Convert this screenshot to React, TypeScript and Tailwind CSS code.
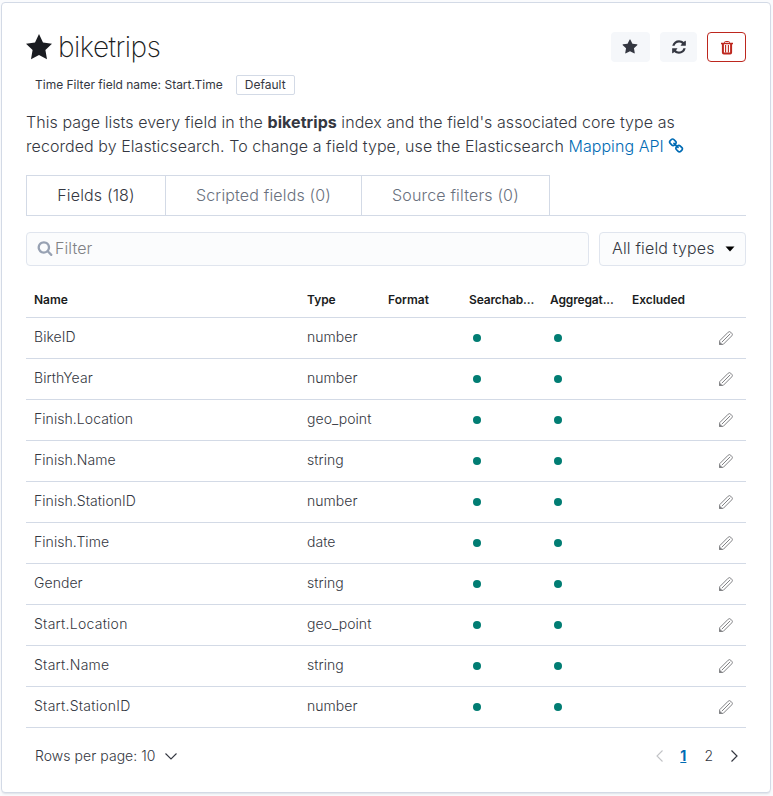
type IconProps = { d: string; className: string };

// 1792-unit glyph grid
const Glyph = ({ d, className }: IconProps) => (
  <svg viewBox="0 0 1792 1792" className={className} fill="currentColor" aria-hidden="true">
    <path d={d} />
  </svg>
);

const STAR =
  "M1728 647q0 22-26 48l-363 354 86 500q1 7 1 20 0 21-10.5 35.5t-30.5 14.5q-19 0-40-12l-449-236-449 236q-22 12-40 12-21 0-31.5-14.5t-10.5-35.5q0-6 2-20l86-500-364-354q-25-27-25-48 0-37 56-46l502-73 225-455q19-41 49-41t49 41l225 455 502 73q56 9 56 46z";
const REFRESH =
  "M1639 1056q0 5-1 7-64 268-268 434.5t-478 166.5q-146 0-282.5-55t-243.5-157l-129 129q-19 19-45 19t-45-19-19-45v-448q0-26 19-45t45-19h448q26 0 45 19t19 45-19 45l-137 137q71 66 161 102t187 36q134 0 250-65t186-179q11-17 53-117 8-23 30-23h192q13 0 22.5 9.5t9.5 22.5zm25-800v448q0 26-19 45t-45 19h-448q-26 0-45-19t-19-45 19-45l138-138q-148-137-349-137-134 0-250 65t-186 179q-11 17-53 117-8 23-30 23h-199q-13 0-22.5-9.5t-9.5-22.5v-7q65-268 270-434.5t480-166.5q146 0 284 55.5t245 156.5l130-129q19-19 45-19t45 19 19 45z";
const LINK =
  "M1520 1216q0-40-28-68l-208-208q-28-28-68-28-42 0-72 32 3 3 19 18.5t21.5 21.5 15 19 13 25.5 3.5 27.5q0 40-28 68t-68 28q-15 0-27.5-3.5t-25.5-13-19-15-21.5-21.5-18.5-19q-33 31-33 73 0 40 28 68l206 207q27 27 68 27 40 0 68-26l147-146q28-28 28-67zm-703-705q0-40-28-68l-206-207q-28-28-68-28-39 0-68 27l-147 146q-28 28-28 67 0 40 28 68l208 208q27 27 68 27 42 0 72-31-3-3-19-18.5t-21.5-21.5-15-19-13-25.5-3.5-27.5q0-40 28-68t68-28q15 0 27.5 3.5t25.5 13 19 15 21.5 21.5 18.5 19q33-31 33-73zm895 705q0 120-85 203l-147 146q-83 83-203 83-121 0-204-85l-206-207q-83-83-83-203 0-123 88-209l-88-88q-86 88-208 88-120 0-204-84l-208-208q-84-84-84-204t85-203l147-146q83-83 203-83 121 0 204 85l206 207q83 83 83 203 0 123-88 209l88 88q86-88 208-88 120 0 204 84l208 208q84 84 84 204z";
const SEARCH =
  "M1216 832q0-185-131.5-316.5t-316.5-131.5-316.5 131.5-131.5 316.5 131.5 316.5 316.5 131.5 316.5-131.5 131.5-316.5zm512 832q0 52-38 90t-90 38q-54 0-90-38l-343-342q-179 124-399 124-143 0-273.5-55.5t-225-150-150-225-55.5-273.5 55.5-273.5 150-225 225-150 273.5-55.5 273.5 55.5 225 150 150 225 55.5 273.5q0 220-124 399l343 343q37 37 37 90z";

const TrashIcon = () => (
  <svg viewBox="0 0 14 16" className="mt-0.5 h-4 w-3.5" fill="none" stroke="currentColor" aria-hidden="true">
    <path d="M4.500 3V2.500Q4.500 1.500 5.500 1.500H8.500Q9.500 1.500 9.500 2.500V3" />
    <path d="M1 3.500H13" strokeWidth="1.500" />
    <path d="M2.900 4V12.500Q2.900 13.400 3.800 13.400H10.200Q11.100 13.400 11.100 12.500V4" strokeWidth="2" />
    <path d="M5.600 5V12.500M8.400 5V12.500" strokeWidth="1.100" />
  </svg>
);

const PencilIcon = () => (
  <svg viewBox="0 0 16 16" className="size-4" fill="none" stroke="#808184" strokeLinejoin="round" aria-hidden="true">
    <path d="M1.500 14.500L1.700 10.700L10.200 2.200Q11.500 1 12.700 2.200L13.800 3.300Q15 4.500 13.800 5.800L5.300 14.300Z" />
    <path d="M3.800 12.200L12.200 3.800" />
    <path d="M1.200 14.800L1.500 11.400L4.600 14.500Z" fill="#808184" stroke="none" />
  </svg>
);

const rows = [
  ["BikeID", "number"],
  ["BirthYear", "number"],
  ["Finish.Location", "geo_point"],
  ["Finish.Name", "string"],
  ["Finish.StationID", "number"],
  ["Finish.Time", "date"],
  ["Gender", "string"],
  ["Start.Location", "geo_point"],
  ["Start.Name", "string"],
  ["Start.StationID", "number"],
];

const GRID = "grid grid-cols-[273px_81px_81px_81px_82px_81px_41px] border-b border-[#d3dae6]";

const Dot = () => (
  <div className="flex items-center px-3 pb-px">
    <span className="size-2 rounded-full bg-[#017d73]" />
  </div>
);

export default function App() {
  return (
    <div className="h-[796px] w-[773px] bg-[#fafbfd] pl-px pt-0.5 font-['Inter',sans-serif] font-light text-[#343741]">
      <main className="h-[791px] w-[770px] rounded border border-[#d3dae6] bg-white px-6 pt-[29px] shadow-[0_2px_2px_-1px_rgba(152,162,179,0.3)]">
        <header className="flex h-[30px] items-center justify-between">
          <h1 className="flex items-center text-[28px] font-[250] leading-[30px] tracking-[-0.5px] text-[#1a1c21]">
            <svg viewBox="0 0 26 26" className="mr-1.5 size-[26px]" fill="currentColor" aria-hidden="true">
              <path d="M13 0L17 8.500L26 9.800L19.400 16.100L21 25.300L13 21L5 25.300L6.600 16.100L0 9.800L9 8.500Z" />
            </svg>
            biketrips
          </h1>
          <div className="flex gap-2.5">
            <button className="flex h-[30px] w-[39px] items-center justify-center rounded bg-[#f5f7fa] pr-px">
              <Glyph d={STAR} className="size-4" />
            </button>
            <button className="flex h-[30px] w-[37px] items-center justify-center rounded bg-[#f5f7fa]">
              <Glyph d={REFRESH} className="size-4" />
            </button>
            <button className="flex h-[30px] w-[39px] items-center justify-center rounded border border-[#bd271e] text-[#bd271e]">
              <TrashIcon />
            </button>
          </div>
        </header>

        <div className="mt-[13px] flex h-5 items-center pl-[9px] text-xs font-normal">
          <span>Time Filter field name: Start.Time</span>
          <span className="ml-[13px] flex h-5 w-[59px] items-center justify-center rounded-xs border border-[#d3dae6]">Default</span>
        </div>

        <p className="mt-[15px] whitespace-nowrap text-base leading-6 tracking-[0.06px]">
          This page lists every field in the <strong className="font-bold">biketrips</strong> index and the field's associated core type as
          <br />
          recorded by Elasticsearch. To change a field type, use the Elasticsearch{" "}
          <a className="text-[#006bb4]">
            Mapping API<Glyph d={LINK} className="mb-1 ml-1 inline size-4" />
          </a>
        </p>

        <nav className="mt-[17px] flex h-[41px] border-b border-[#d3dae6] text-base leading-[38px] tracking-[0.16px] text-[#69707d]">
          <div className="w-[139px] border-l border-t border-[#d3dae6] text-center text-[#343741]">Fields (18)</div>
          <div className="w-[196px] border-l border-t border-[#d3dae6] text-center">Scripted fields (0)</div>
          <div className="w-[189px] border-x border-t border-[#d3dae6] text-center">Source filters (0)</div>
        </nav>

        <div className="mt-4 flex h-[34px] gap-2.5 text-base leading-[30px]">
          <div className="flex w-[563px] rounded border border-[#e0e5ee] bg-[#fbfcfd] pl-2.5 tracking-[0.1px] text-[#808184]">
            <Glyph d={SEARCH} className="mr-[2px] mt-[7px] size-4 text-[#98a2b3]" />
            Filter
          </div>
          <div className="flex w-[147px] justify-between rounded border border-[#e0e5ee] bg-[#fbfcfd] pl-3 pr-2.5 tracking-[0.16px]">
            All field types
            <svg viewBox="0 0 10 6" className="mt-[13px] h-1.5 w-2.5" aria-hidden="true">
              <path d="M0.500 0.500H9.500L5 5.500Z" fill="#000" />
            </svg>
          </div>
        </div>

        <section className="mt-[11px] text-sm">
          <div className={`${GRID} h-[41px] items-center pt-[5px] text-xs font-semibold tracking-[-0.04px] text-[#1a1c21]`}>
            <span className="px-2">Name</span>
            <span className="px-2">Type</span>
            <span className="px-2 tracking-[0.05px]">Format</span>
            <span className="px-2 tracking-[-0.14px]">Searchab...</span>
            <span className="px-2 tracking-[-0.14px]">Aggregat...</span>
            <span className="px-2">Excluded</span>
          </div>
          {rows.map(([name, type]) => (
            <div key={name} className={`${GRID} h-[41px]`}>
              <span className={`px-2 leading-[38px] ${name.startsWith("Start") ? "tracking-[0.26px]" : "tracking-[0.06px]"}`}>{name}</span>
              <span className="px-2 leading-[38px] tracking-[0.04px]">{type}</span>
              <span />
              <Dot />
              <Dot />
              <span />
              <span className="flex items-center justify-center">
                <PencilIcon />
              </span>
            </div>
          ))}
        </section>

        <footer className="mt-[18px] flex h-5 items-center text-sm">
          <span className="pl-[9px] tracking-[0.05px]">Rows per page: 10</span>
          <svg viewBox="0 0 12 7" className="ml-[9px] h-[7px] w-3" fill="none" stroke="currentColor" strokeWidth="1.1" aria-hidden="true">
            <path d="M0.500 0.500L6 6L11.500 0.500" />
          </svg>
          <div className="ml-auto flex items-center pr-2">
            <svg viewBox="0 0 7 12" className="mr-[17px] h-3 w-[7px]" fill="none" stroke="#c2c3c6" strokeWidth="1.1" aria-hidden="true">
              <path d="M6.500 0.500L1 6L6.500 11.500" />
            </svg>
            <span className="mr-[18px] font-bold text-[#006bb4] underline">1</span>
            <span className="mr-[18px]">2</span>
            <svg viewBox="0 0 7 12" className="h-3 w-[7px]" fill="none" stroke="currentColor" strokeWidth="1.2" aria-hidden="true">
              <path d="M0.500 0.500L6 6L0.500 11.500" />
            </svg>
          </div>
        </footer>
      </main>
    </div>
  );
}
